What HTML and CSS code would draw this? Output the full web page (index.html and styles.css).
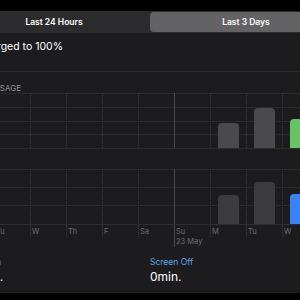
FILE: index.html
```html
<!DOCTYPE html>
<html lang="en">
<head>
  <meta charset="UTF-8" />
  <meta name="viewport" content="width=device-width, initial-scale=1.0"/>
  <title>Battery</title>
  <link rel="stylesheet" href="styles.css">
</head>
<body>
  <div class="screen">
    <div class="status-bar"></div>

    <!-- Range picker -->
    <div class="segmented">
      <div class="segment">Last 24 Hours</div>
      <div class="segment active">Last 3 Days</div>
    </div>

    <div class="charged">Last charged to 100%</div>

    <!-- Battery usage chart -->
    <div class="section-title">Battery Usage</div>
    <div class="chart chart-level">
      <div class="col"></div>
      <div class="col"></div>
      <div class="col"></div>
      <div class="col"></div>
      <div class="col"></div>
      <div class="col"></div>
      <div class="col week"></div>
      <div class="col"><div class="bar gray" style="height:25px"></div></div>
      <div class="col"><div class="bar gray" style="height:40px"></div></div>
      <div class="col"><div class="bar green" style="height:29px"></div></div>
    </div>

    <!-- Activity chart -->
    <div class="section-title">Activity</div>
    <div class="chart chart-activity">
      <div class="col"></div>
      <div class="col"></div>
      <div class="col"></div>
      <div class="col"></div>
      <div class="col"></div>
      <div class="col"></div>
      <div class="col week"></div>
      <div class="col"><div class="bar dark" style="height:29px"></div></div>
      <div class="col"><div class="bar dark" style="height:42px"></div></div>
      <div class="col"><div class="bar blue" style="height:30px"></div></div>
    </div>
    <div class="axis">
      <div class="col"><span>M</span></div>
      <div class="col"><span>Tu</span></div>
      <div class="col"><span>W</span></div>
      <div class="col"><span>Th</span></div>
      <div class="col"><span>F</span></div>
      <div class="col"><span>Sa</span></div>
      <div class="col week"><span>Su</span><span>23 May</span></div>
      <div class="col"><span>M</span></div>
      <div class="col"><span>Tu</span></div>
      <div class="col"><span>W</span></div>
    </div>

    <!-- Totals -->
    <div class="totals">
      <div class="total">
        <div class="total-label on">Screen On</div>
        <div class="total-value">1h 1min.</div>
      </div>
      <div class="total">
        <div class="total-label off">Screen Off</div>
        <div class="total-value">0min.</div>
      </div>
    </div>
  </div>
  <div class="home-bar"></div>
</body>
</html>
```

FILE: styles.css
```css
* {
  margin: 0;
  padding: 0;
  box-sizing: border-box;
  font-family: Inter, "Noto Sans", sans-serif;
}
body {
  background: #1c1c1e;
  color: #fff;
  width: 300px;
  height: 300px;
  overflow: hidden;
}
.screen {
  width: 390px;
  margin-left: -44px;
}
.status-bar {
  height: 11px;
  background: #000;
  margin: 0 -20px;
}
.segmented {
  display: flex;
  height: 22px;
  padding: 1px 2px 1px 22px;
  background: #2c2c2e;
  margin: 0 -20px;
}
.segment {
  width: 192px;
  display: flex;
  align-items: center;
  justify-content: center;
  font-size: 8.5px;
  font-weight: 600;
  color: #fff;
  border-radius: 4px;
}
.segment.active {
  background: #636366;
}
.charged {
  padding: 6px 0 16px 19px;
  margin: 0 -20px;
  font-size: 10.5px;
  line-height: 16px;
  border-bottom: 1px solid #2e2e30;
}
.section-title {
  margin-top: 11px;
  font-size: 8px;
  line-height: 10px;
  color: #8e8e93;
  text-transform: uppercase;
}
.chart + .section-title {
  margin-top: 10px;
}
.chart {
  display: flex;
  margin-left: 2px;
  height: 56px;
  border-bottom: 1px solid #2e2e30;
  background-image:
    linear-gradient(#2a2a2c, #2a2a2c),
    linear-gradient(#2a2a2c, #2a2a2c),
    linear-gradient(#2a2a2c, #2a2a2c),
    linear-gradient(#2a2a2c, #2a2a2c);
  background-repeat: no-repeat;
  background-size: 100% 1px;
  background-position: 0 0, 0 14px, 0 28px, 0 41px;
}
.chart-activity {
  background-image:
    linear-gradient(#2a2a2c, #2a2a2c),
    linear-gradient(#2a2a2c, #2a2a2c),
    linear-gradient(#2a2a2c, #2a2a2c);
  background-position: 0 0, 0 18px, 0 36px;
}
.col {
  width: 36px;
  flex-shrink: 0;
  border-left: 1px dotted #3a3a3c;
}
.col.week {
  border-left: 1px solid #48484a;
}
.chart .col {
  display: flex;
  align-items: flex-end;
  justify-content: center;
}
.bar {
  width: 21px;
  border-radius: 4px 4px 0 0;
}
.bar.gray { background: #4a4a4c; }
.bar.dark { background: #3c3c3e; }
.bar.green { background: #65c466; }
.bar.blue { background: #3a82f7; }
.axis {
  display: flex;
  align-items: flex-start;
  margin-left: 2px;
}
.axis .col {
  display: flex;
  flex-direction: column;
  padding: 2px 0 0 1px;
  font-size: 7.5px;
  line-height: 10px;
  color: #6d6d72;
}
.totals {
  display: grid;
  grid-template-columns: 191px 1fr;
  margin: 9px 0 0 3px;
  padding-bottom: 8px;
}
.total-label {
  font-size: 8.5px;
  line-height: 12px;
}
.total-label.on { color: #3a82f7; }
.total-label.off { color: #5aa8e6; }
.total-value {
  font-size: 12px;
  line-height: 17px;
  color: #fff;
}
.home-bar {
  height: 20px;
  background: #000;
}
```
